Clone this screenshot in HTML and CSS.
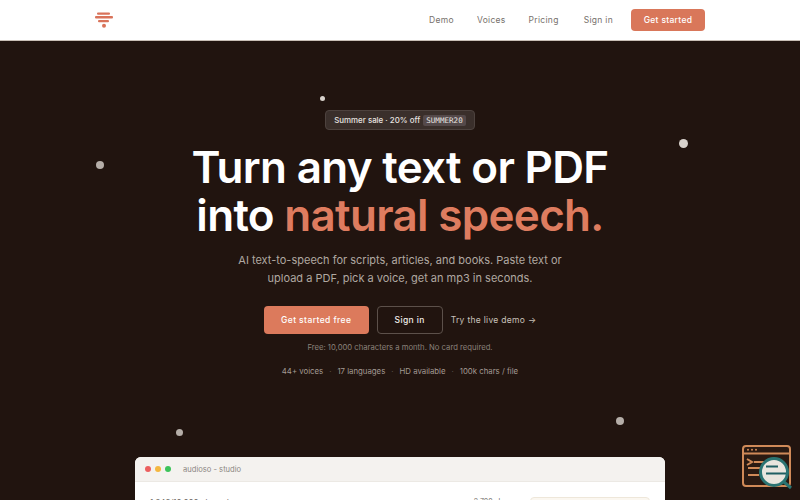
FILE: index.html
```html
<!DOCTYPE html>
<html lang="en">
<head>
    <meta charset="UTF-8">
    <meta name="viewport" content="width=device-width, initial-scale=1.0">
    <title>audioso - Turn any text or PDF into natural speech</title>
    <link rel="stylesheet" href="styles.css">
</head>
<body>

    <!-- Navigation -->
    <nav class="nav">
        <svg class="logo" width="18" height="16" viewBox="0 0 18 16" aria-label="audioso">
            <rect x="2" y="0.5" width="13" height="2.2" rx="1" fill="#d9735a"/>
            <rect x="0" y="4" width="18" height="2.4" rx="1" fill="#d9735a"/>
            <rect x="3" y="8" width="11" height="2.2" rx="1" fill="#d9735a"/>
            <circle cx="9" cy="13.7" r="2" fill="#d9735a"/>
        </svg>
        <ul class="nav-links">
            <li><a href="#">Demo</a></li>
            <li><a href="#">Voices</a></li>
            <li><a href="#">Pricing</a></li>
            <li><a class="nav-signin" href="#">Sign in</a></li>
        </ul>
        <a class="nav-cta" href="#">Get started</a>
    </nav>

    <main class="hero">
        <!-- Floating dots -->
        <span class="dot dot-1"></span>
        <span class="dot dot-2"></span>
        <span class="dot dot-3"></span>
        <span class="dot dot-4"></span>
        <span class="dot dot-5"></span>

        <div class="promo">
            <span>Summer sale · 20% off</span>
            <code class="promo-code">SUMMER20</code>
        </div>

        <h1 class="title">Turn any text or PDF<br>into <em>natural speech.</em></h1>

        <p class="lead">AI text-to-speech for scripts, articles, and books. Paste text or upload a PDF, pick a voice, get an mp3 in seconds.</p>

        <div class="actions">
            <a class="btn btn-primary" href="#">Get started free</a>
            <a class="btn btn-outline" href="#">Sign in</a>
            <a class="demo-link" href="#">Try the live demo →</a>
        </div>

        <p class="note">Free: 10,000 characters a month. No card required.</p>

        <ul class="facts">
            <li>44+ voices</li>
            <li class="sep">·</li>
            <li>17 languages</li>
            <li class="sep">·</li>
            <li>HD available</li>
            <li class="sep">·</li>
            <li>100k chars / file</li>
        </ul>

        <!-- Studio preview -->
        <section class="studio">
            <header class="studio-bar">
                <span class="light light-red"></span>
                <span class="light light-yellow"></span>
                <span class="light light-green"></span>
                <span class="studio-name">audioso - studio</span>
            </header>
            <div class="studio-body">
                <span class="studio-count">1,243/10,000 characters</span>
                <span class="studio-cost">2,700 chars</span>
                <span class="studio-pill"></span>
            </div>
        </section>
    </main>

    <!-- Floating widget -->
    <svg class="widget" width="52" height="46" viewBox="0 0 52 46" aria-hidden="true">
        <rect x="2" y="2" width="47" height="40" rx="3" fill="#2a1a12" stroke="#d08a58" stroke-width="2"/>
        <path d="M2 9.5 H49" stroke="#d08a58" stroke-width="2"/>
        <circle cx="7" cy="5.8" r="1" fill="#d08a58"/>
        <circle cx="11" cy="5.8" r="1" fill="#d08a58"/>
        <circle cx="15" cy="5.8" r="1" fill="#d08a58"/>
        <path d="M6 15 L11 18 L6 21 M13 18 H24 M7 24 H20 M7 31 H18" fill="none" stroke="#d08a58" stroke-width="2"/>
        <circle cx="33" cy="28" r="13.5" fill="#e9e6de" stroke="#2a7472" stroke-width="3"/>
        <path d="M25 22.5 H37 M25 29.5 H45" stroke="#1f5f62" stroke-width="2"/>
        <path d="M43 38 L50 44" stroke="#2a7472" stroke-width="3"/>
    </svg>

</body>
</html>
```

FILE: styles.css
```css
* {
    box-sizing: border-box;
}

html, body {
    height: 500px;
    overflow: hidden;
}

body {
    margin: 0;
    font-family: Inter, "Liberation Sans", sans-serif;
    background: #21140f;
    color: #fff;
}

a {
    text-decoration: none;
    color: inherit;
}

ul {
    list-style: none;
    margin: 0;
    padding: 0;
}

/* Nav */
.nav {
    display: flex;
    align-items: center;
    height: 41px;
    padding: 0 95px;
    background: #fff;
    border-bottom: 1px solid #c9bfb6;
}

.nav-links {
    display: flex;
    gap: 23px;
    margin-left: auto;
    font-size: 8.5px;
    letter-spacing: 0.3px;
    color: #77716c;
}

.nav-signin {
    margin-left: 2px;
}

.nav-cta {
    width: 74px;
    height: 22px;
    margin-left: 18px;
    line-height: 22px;
    text-align: center;
    font-size: 8.5px;
    font-weight: 500;
    letter-spacing: 0.3px;
    color: #fff;
    background: #d9775a;
    border-radius: 4px;
}

/* Hero */
.hero {
    position: relative;
    display: flex;
    flex-direction: column;
    align-items: center;
    height: 459px;
    padding-top: 69px;
    overflow: hidden;
    text-align: center;
}

.dot {
    position: absolute;
    border-radius: 50%;
    background: #d8d2cc;
}

.dot-1 { left: 320px; top: 55px; width: 5px; height: 5px; }
.dot-2 { left: 96px; top: 120px; width: 8px; height: 8px; background: #b5aea8; }
.dot-3 { left: 679px; top: 98px; width: 9px; height: 9px; }
.dot-4 { left: 176px; top: 388px; width: 7px; height: 7px; background: #b5aea8; }
.dot-5 { left: 616px; top: 376px; width: 8px; height: 8px; background: #b5aea8; }

.promo {
    display: flex;
    align-items: center;
    gap: 3px;
    height: 20px;
    padding: 0 8px;
    font-size: 7.9px;
    font-weight: 500;
    color: #e8e4e0;
    background: #3a2f2b;
    border: 1px solid #4d423e;
    border-radius: 4px;
}

.promo-code {
    padding: 1px 3px;
    font-family: "DejaVu Sans Mono", monospace;
    font-size: 7.6px;
    background: #54494a;
    border-radius: 2px;
}

.title {
    margin: 13px 0 0;
    font-size: 44px;
    line-height: 48px;
    font-weight: 600;
    letter-spacing: -0.7px;
}

.title em {
    font-style: normal;
    color: #de7c5f;
}

.lead {
    width: 340px;
    margin: 12px 0 0;
    font-size: 11px;
    line-height: 18px;
    color: #b0a8a1;
}

.actions {
    display: flex;
    align-items: center;
    gap: 8px;
    margin-top: 19px;
}

.btn {
    display: block;
    height: 28px;
    line-height: 26px;
    font-size: 8.5px;
    font-weight: 500;
    letter-spacing: 0.4px;
    border-radius: 4px;
    border: 1px solid transparent;
}

.btn-primary {
    width: 105px;
    color: #fff;
    background: #dc7a5c;
}

.btn-outline {
    width: 66px;
    color: #f2eeea;
    border-color: #5c504a;
}

.demo-link {
    font-size: 8.5px;
    letter-spacing: 0.3px;
    color: #c9c2bb;
}

.note {
    margin: 9px 0 0;
    font-size: 7.7px;
    color: #8a817a;
}

.facts {
    display: flex;
    gap: 6px;
    margin-top: 14px;
    font-size: 7.8px;
    color: #a39a93;
}

.sep {
    color: #5e544e;
}

/* Studio card */
.studio {
    flex: none;
    width: 530px;
    height: 43px;
    margin-top: 81px;
    overflow: hidden;
    background: #fff;
    border-radius: 6px 6px 0 0;
    color: #6f6a66;
}

.studio-bar {
    display: flex;
    align-items: center;
    gap: 4px;
    height: 25px;
    padding: 0 10px;
    background: #f4f2ef;
    border-bottom: 1px solid #ece9e4;
}

.light {
    width: 6px;
    height: 6px;
    border-radius: 50%;
}

.light-red { background: #ec5f5f; }
.light-yellow { background: #f4b740; }
.light-green { background: #3cc35a; }

.studio-name {
    margin-left: 8px;
    font-size: 7.6px;
    color: #8d8883;
}

.studio-body {
    display: flex;
    align-items: flex-start;
    padding: 15px 15px;
    font-size: 8px;
}

.studio-cost {
    margin-left: auto;
    margin-right: 17px;
    font-size: 7px;
}

.studio-pill {
    width: 120px;
    height: 20px;
    background: #fbf7f0;
    border: 1px solid #eee7da;
    border-radius: 4px;
}

/* Widget */
.widget {
    position: fixed;
    right: 7px;
    bottom: 10px;
}
```
